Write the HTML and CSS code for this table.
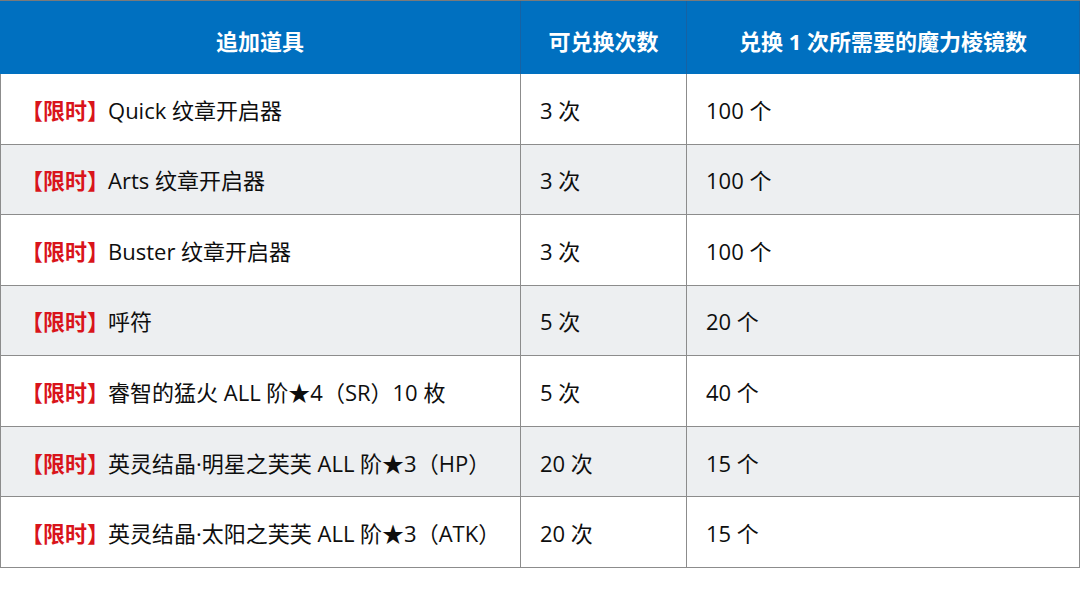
FILE: index.html
```html
<!DOCTYPE html>
<html lang="zh-CN">
<head>
<meta charset="utf-8">
<title>追加道具</title>
<link rel="stylesheet" href="styles.css">
</head>
<body>
<div class="table">
  <div class="cell head">追加道具</div>
  <div class="cell head">可兑换次数</div>
  <div class="cell head">兑换 1 次所需要的魔力棱镜数</div>

  <div class="cell c1"><span class="tag">【限时】</span>Quick 纹章开启器</div>
  <div class="cell">3 次</div>
  <div class="cell">100 个</div>

  <div class="cell c1 alt"><span class="tag">【限时】</span>Arts 纹章开启器</div>
  <div class="cell alt">3 次</div>
  <div class="cell alt">100 个</div>

  <div class="cell c1"><span class="tag">【限时】</span>Buster 纹章开启器</div>
  <div class="cell">3 次</div>
  <div class="cell">100 个</div>

  <div class="cell c1 alt"><span class="tag">【限时】</span>呼符</div>
  <div class="cell alt">5 次</div>
  <div class="cell alt">20 个</div>

  <div class="cell c1"><span class="tag">【限时】</span>睿智的猛火 ALL 阶★4（SR）10 枚</div>
  <div class="cell">5 次</div>
  <div class="cell">40 个</div>

  <div class="cell c1 alt"><span class="tag">【限时】</span>英灵结晶·明星之芙芙 ALL 阶★3（HP）</div>
  <div class="cell alt">20 次</div>
  <div class="cell alt">15 个</div>

  <div class="cell c1"><span class="tag">【限时】</span>英灵结晶·太阳之芙芙 ALL 阶★3（ATK）</div>
  <div class="cell">20 次</div>
  <div class="cell">15 个</div>
</div>
</body>
</html>
```
FILE: styles.css
```css
html, body {
  margin: 0;
  padding: 0;
  background: #ffffff;
}
body {
  font-family: "Open Sans", "Noto Sans CJK SC", sans-serif;
  color: #0e0e0e;
}
.table {
  display: grid;
  grid-template-columns: 521px 166px 393px;
  grid-template-rows: 73px repeat(7, 70.57px);
  width: 1080px;
  border-top: 1px solid #7a7a7a;
  box-sizing: border-box;
}
.cell {
  display: flex;
  align-items: center;
  padding-left: 19px;
  font-size: 22px;
  border-right: 1px solid #8c8c8c;
  border-bottom: 1px solid #8c8c8c;
  box-sizing: border-box;
  white-space: nowrap;
  padding-top: 0;
}
.c1 {
  border-left: 1px solid #8c8c8c;
  padding-left: 22px;
}
.alt {
  background: #edeff1;
}
.head {
  background: #0070c0;
  color: #ffffff;
  font-weight: 700;
  font-size: 22px;
  justify-content: center;
  padding-left: 0;
  padding-top: 4px;
  border-right: 1px solid #1762a3;
  border-bottom: none;
  border-left: none;
}
.tag {
  color: #d9141b;
  font-weight: 700;
  font-family: "Noto Sans CJK SC", sans-serif;
  margin-left: -2px;
  margin-right: -1px;
}
```
